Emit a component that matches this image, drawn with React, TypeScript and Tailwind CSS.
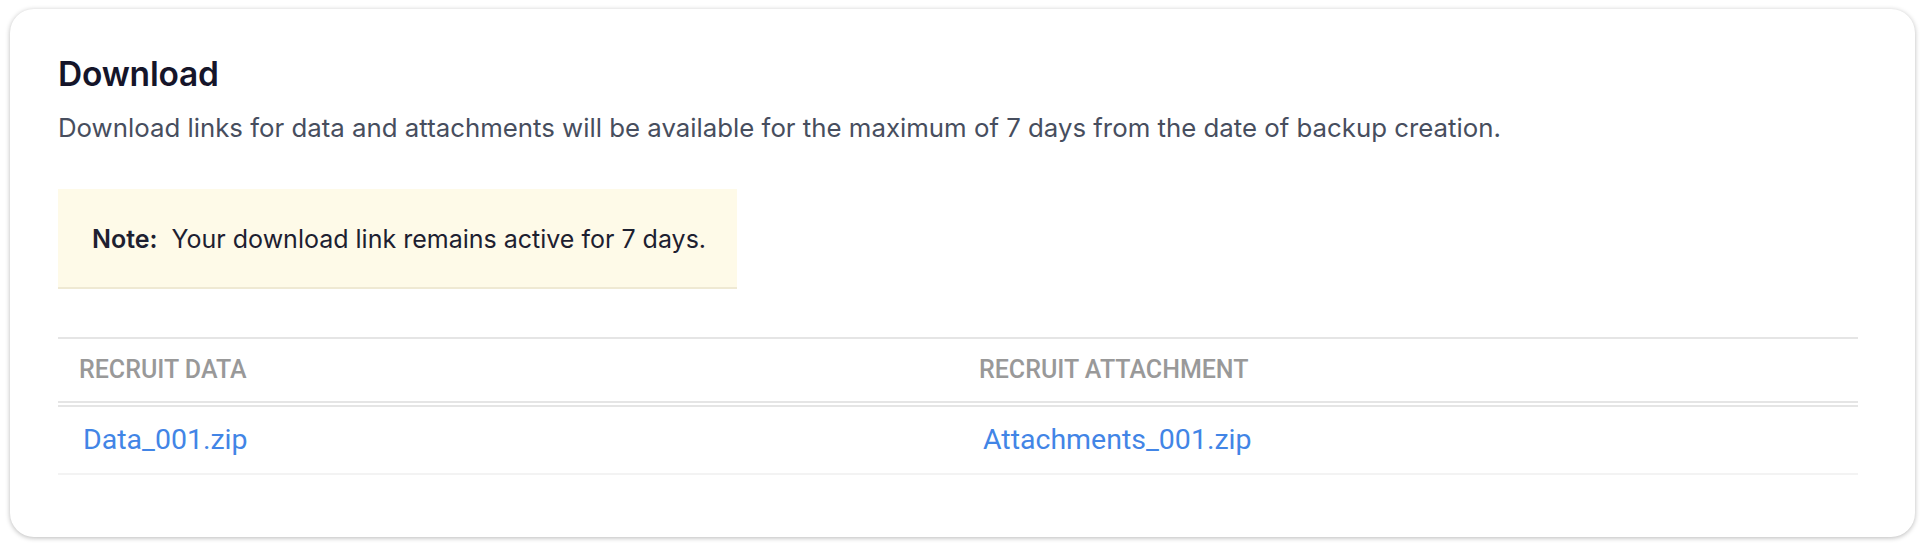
const files = [
  { data: "Data_001.zip", attachment: "Attachments_001.zip" },
];

export default function App() {
  return (
    <div className="min-h-[550px] bg-white pt-[9px] pl-[10px]">
      <div className="w-[1905px] h-[528px] rounded-[24px] bg-white shadow-[0_1px_5px_rgba(0,0,0,0.28)] pl-12 pt-[45px] font-['Inter',sans-serif]">
        <h2 className="text-[33.5px] leading-[40px] font-semibold text-[#15152a] tracking-[-0.2px]">Download</h2>
        <p className="mt-[18px] text-[25.8px] leading-[32px] text-[#474e5e]">
          Download links for data and attachments will be available for the maximum of 7 days from the date of backup creation.
        </p>

        <div className="mt-[45px] w-[679px] bg-[#fefae8] border-b-2 border-[#efe9d3] pl-[34px] pt-[34px] pb-[32px]">
          <div className="flex gap-[14px] text-[25px] leading-[32px] text-[#1d2030]">
            <span className="font-semibold">Note:</span>
            <span>Your download link remains active for 7 days.</span>
          </div>
        </div>

        <div className="mt-[48px] w-[1800px] font-['Roboto',sans-serif]">
          <div className="grid grid-cols-2 h-[70px] items-center border-t-2 border-b-[6px] border-double border-[#e5e5e5] text-[25px] font-medium text-[#999999]">
            <div className="pl-[21px]">RECRUIT DATA</div>
            <div className="pl-[21px]">RECRUIT ATTACHMENT</div>
          </div>
          {files.map((f) => (
            <div key={f.data} className="grid grid-cols-2 h-[68px] items-center border-b-2 border-[#f3f3f3] text-[28.5px] text-[#4285e6]">
              <a href="#" className="pl-[25px]">{f.data}</a>
              <a href="#" className="pl-[25px]">{f.attachment}</a>
            </div>
          ))}
        </div>
      </div>
    </div>
  );
}
